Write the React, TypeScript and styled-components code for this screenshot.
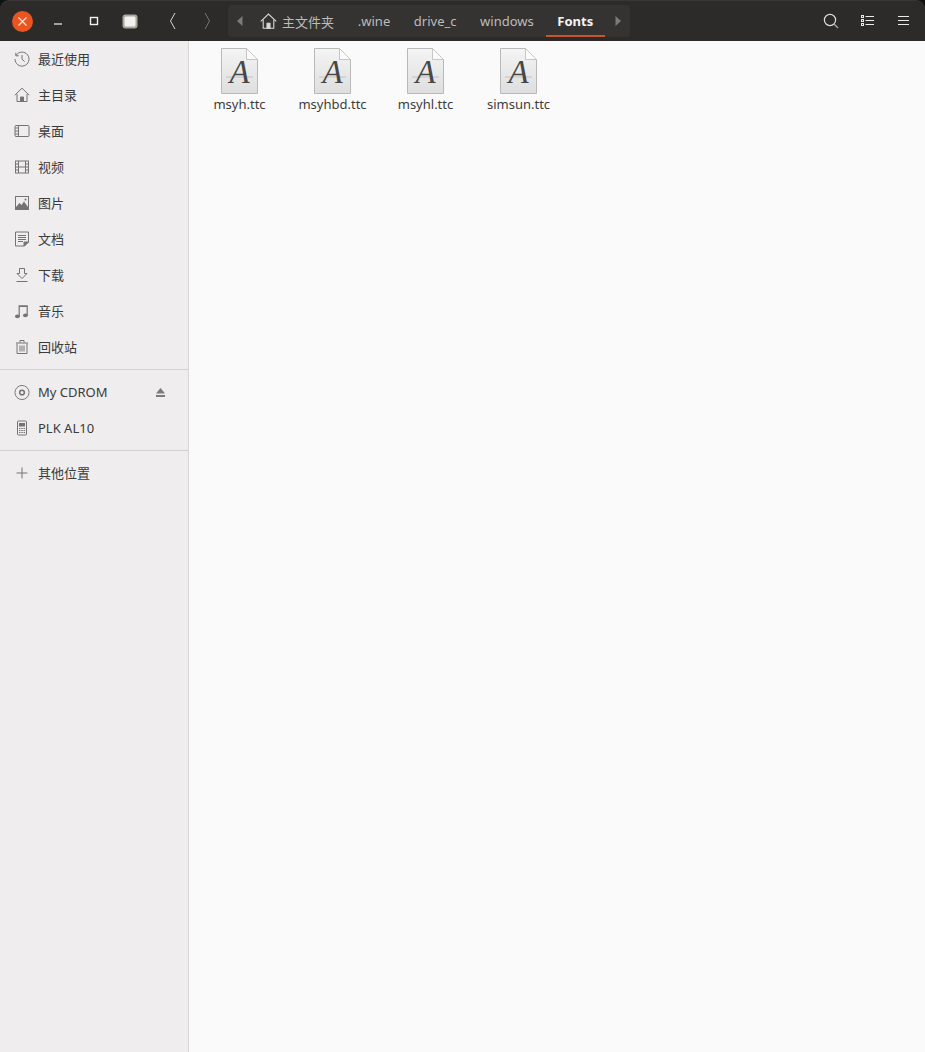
import React from "react";
import styled, { createGlobalStyle } from "styled-components";

const GlobalStyle = createGlobalStyle`
  html, body {
    margin: 0;
    padding: 0;
    background: #2c2b2a;
  }
  * {
    box-sizing: border-box;
  }
`;

const latin = `"Noto Sans", "Noto Sans CJK SC", sans-serif`;

const Win = styled.div`
  width: 925px;
  height: 1052px;
  display: flex;
  flex-direction: column;
  overflow: hidden;
  font-family: ${latin};
  background: #fafafa;
`;

const HeaderBar = styled.header`
  height: 41px;
  flex: none;
  display: flex;
  align-items: center;
  padding: 0 4px;
  background: #2c2b2a;
  border-top: 1px solid #383736;
  border-radius: 9px 9px 0 0;
  box-shadow: 0 -9px 0 #111;
`;

const IconSlot = styled.div<{ $w: number }>`
  width: ${(p) => p.$w}px;
  height: 36px;
  flex: none;
  display: flex;
  align-items: center;
  justify-content: center;
`;

const CloseDot = styled.div`
  width: 21px;
  height: 21px;
  border-radius: 50%;
  background: #e95420;
  display: flex;
  align-items: center;
  justify-content: center;
`;

const PathBar = styled.nav`
  width: 402px;
  height: 32px;
  margin-left: 4px;
  flex: none;
  display: flex;
  align-items: stretch;
  background: #343332;
  border-radius: 4px;
`;

const PathArrow = styled.div<{ $w: number }>`
  width: ${(p) => p.$w}px;
  flex: none;
  display: flex;
  align-items: center;
  justify-content: center;
`;

const Crumb = styled.div<{ $active?: boolean }>`
  padding: 0 11.8px;
  display: flex;
  align-items: center;
  gap: 5px;
  font-size: 13px;
  font-weight: ${(p) => (p.$active ? 700 : 400)};
  color: ${(p) => (p.$active ? "#f4f4f3" : "#bdbcba")};
  border-bottom: 2px solid ${(p) => (p.$active ? "#c9532a" : "transparent")};
  border-top: 2px solid transparent;
  white-space: nowrap;
`;

const HomeCrumb = styled(Crumb)`
  padding-left: 8px;
  padding-right: 12px;
`;

const Tools = styled.div`
  margin-left: auto;
  display: flex;
`;

const Body = styled.div`
  flex: 1;
  display: flex;
  min-height: 0;
`;

const Sidebar = styled.aside`
  width: 189px;
  flex: none;
  background: #efedee;
  border-right: 1px solid #d8d6d5;
  color: #3b3b3b;
`;

const Row = styled.div`
  height: 36px;
  display: flex;
  align-items: center;
  padding-left: 14px;
  font-size: 13px;
  color: #3b3b3b;
`;

const RowIcon = styled.div`
  width: 16px;
  height: 16px;
  flex: none;
  margin-right: 8px;
  display: flex;
  align-items: center;
  justify-content: center;
`;

/* the CJK face sits a pixel lower than the latin one */
const CjkLabel = styled.span`
  margin-bottom: 2px;
`;

const EjectSlot = styled.div`
  margin-left: auto;
  margin-right: 23px;
  display: flex;
`;

const Divider = styled.div`
  height: 1px;
  margin: 4px 0;
  background: #d4d2d1;
`;

const Content = styled.main`
  flex: 1;
  display: flex;
  align-items: flex-start;
  padding: 6px 0 0 4px;
  background: #fafafa;
`;

const FileCell = styled.div`
  width: 93px;
  display: flex;
  flex-direction: column;
  align-items: center;
`;

const FileName = styled.div`
  font-size: 13px;
  line-height: 18px;
  color: #3d3d3d;
`;

const stroke = "#747474";

const Line = ({ children }: { children: React.ReactNode }) => (
  <svg width="16" height="16" viewBox="0 0 16 16" fill="none" stroke={stroke} strokeWidth="1">
    {children}
  </svg>
);

const sidebarIcons: Record<string, React.ReactNode> = {
  recent: (
    <Line>
      <path d="M2.2 4.2A7 7 0 1 1 1 8" />
      <path d="M1.8 1.8v3h3" />
      <path d="M8 4v4.2l2.6 2.4" />
    </Line>
  ),
  home: (
    <Line>
      <path d="M.8 8.2 8 1.2l7.2 7" />
      <path d="M3 7v7.5h10V7" />
      <path d="M6.5 14.5V10h3v4.5z" fill={stroke} />
    </Line>
  ),
  desktop: (
    <Line>
      <rect x="1" y="2.5" width="14" height="11" rx="1" />
      <path d="M4.5 2.5v11M1 5h3.5M1 8h3.5M1 11h3.5" />
    </Line>
  ),
  video: (
    <Line>
      <rect x="1.5" y="2" width="13" height="12" />
      <path d="M4.5 2v12M11.5 2v12M4.5 8h7M1.5 5h3M1.5 8h3M1.5 11h3M11.5 5h3M11.5 8h3M11.5 11h3" />
    </Line>
  ),
  picture: (
    <Line>
      <rect x="1.5" y="1.5" width="13" height="13" />
      <path d="M2 12l3.5-4 2 2 2.5-3.5 4 5.5v2H2z" fill={stroke} stroke="none" />
      <circle cx="11.5" cy="4.5" r="1" fill={stroke} stroke="none" />
    </Line>
  ),
  document: (
    <Line>
      <path d="M1.5 1h13v10l-4 4h-9z" />
      <path d="M4 4.5h8M4 6.5h8M4 8.5h8M4 10.5h5" />
      <path d="M10 15v-4h4.5z" fill={stroke} />
    </Line>
  ),
  download: (
    <Line>
      <path d="M5.5 1.5h5v5h2.5L8 11.5 3 6.5h2.5z" />
      <path d="M2.5 14.5h11" />
    </Line>
  ),
  music: (
    <svg width="16" height="16" viewBox="0 0 16 16" fill={stroke}>
      <path d="M4.6 2.2h9.2v10h-1.2V4H5.8v9.4H4.6z" />
      <ellipse cx="3.4" cy="13.3" rx="2.4" ry="1.9" />
      <ellipse cx="11.4" cy="12.3" rx="2.4" ry="1.9" />
    </svg>
  ),
  trash: (
    <Line>
      <path d="M2 4h12M6 3.5V1.5h4v2" />
      <path d="M3 4.5v10h10v-10" />
      <path d="M6 6.5v6M8 6.5v6M10 6.5v6" />
    </Line>
  ),
  disc: (
    <svg width="17" height="17" viewBox="0 0 17 17" fill="none" stroke={stroke} strokeWidth="1">
      <circle cx="8.5" cy="8.5" r="7.5" />
      <circle cx="8.5" cy="8.5" r="2.5" strokeWidth="1.6" />
    </svg>
  ),
  phone: (
    <svg width="16" height="16" viewBox="0 0 16 16" fill="none" stroke={stroke} strokeWidth="1">
      <rect x="3.5" y="1" width="9" height="14" rx="1" />
      <rect x="5" y="3" width="6" height="3.5" fill={stroke} stroke="none" />
      <path d="M5 8.5h1.5M7.3 8.5h1.5M9.6 8.5h1.5M5 10.5h1.5M7.3 10.5h1.5M9.6 10.5h1.5M5 12.5h1.5M7.3 12.5h1.5M9.6 12.5h1.5" />
    </svg>
  ),
  plus: (
    <Line>
      <path d="M8 2.5v11M2.5 8h11" />
    </Line>
  ),
};

const places = [
  ["recent", "最近使用"],
  ["home", "主目录"],
  ["desktop", "桌面"],
  ["video", "视频"],
  ["picture", "图片"],
  ["document", "文档"],
  ["download", "下载"],
  ["music", "音乐"],
  ["trash", "回收站"],
];

const crumbs = [".wine", "drive_c", "windows"];
const files = ["msyh.ttc", "msyhbd.ttc", "msyhl.ttc", "simsun.ttc"];

const FontFile = ({ id }: { id: string }) => (
  <svg width="38" height="48" viewBox="0 0 38 48">
    <defs>
      <linearGradient id={id} x1="0" y1="0" x2="0" y2="1">
        <stop offset="0" stopColor="#f4f4f4" />
        <stop offset="1" stopColor="#dedede" />
      </linearGradient>
    </defs>
    <path d="M.5 1.5h25l11 11v34H.5z" fill={`url(#${id})`} stroke="#b9b9b9" />
    <path d="M25.5 1.5v11h11z" fill="#fbfbfb" stroke="#c6c6c6" />
    <path d="M5 30h27" stroke="#9a9a9a" strokeOpacity=".45" />
    <text
      x="18.5"
      y="36"
      textAnchor="middle"
      fontFamily="'Liberation Serif', serif"
      fontStyle="italic"
      fontSize="33"
      fill="#474747"
    >
      A
    </text>
  </svg>
);

const App = () => (
  <Win>
    <GlobalStyle />
    <HeaderBar>
      <IconSlot $w={36}>
        <CloseDot>
          <svg width="11" height="11" viewBox="0 0 11 11" stroke="#fbe3d9" strokeWidth="1.2">
            <path d="M1.5 1.5l8 8M9.5 1.5l-8 8" />
          </svg>
        </CloseDot>
      </IconSlot>
      <IconSlot $w={36}>
        <svg width="10" height="10" viewBox="0 0 10 10" stroke="#f0f0f0" strokeWidth="1.2">
          <path d="M1 8h8" />
        </svg>
      </IconSlot>
      <IconSlot $w={36}>
        <svg width="10" height="10" viewBox="0 0 10 10" fill="none" stroke="#f0f0f0" strokeWidth="1.4">
          <rect x="1.5" y="1.5" width="7" height="7" />
        </svg>
      </IconSlot>
      <IconSlot $w={36}>
        <svg width="16" height="15" viewBox="0 0 16 15">
          <rect x=".5" y=".5" width="15" height="14" rx="3" fill="#a9a89c" />
          <rect x="2.5" y="2.5" width="11" height="10" rx="1.5" fill="#f1f1ef" />
        </svg>
      </IconSlot>
      <IconSlot $w={8} />
      <IconSlot $w={34}>
        <svg width="10" height="18" viewBox="0 0 10 18" fill="none" stroke="#d6d5d3" strokeWidth="1">
          <path d="M7 1 2.5 9 7 17" />
        </svg>
      </IconSlot>
      <IconSlot $w={34}>
        <svg width="10" height="18" viewBox="0 0 10 18" fill="none" stroke="#77766f" strokeWidth="1">
          <path d="M3 1l4.5 8L3 17" />
        </svg>
      </IconSlot>
      <PathBar>
        <PathArrow $w={24}>
          <svg width="6" height="10" viewBox="0 0 6 10" fill="#7c7b79">
            <path d="M5.5 0v10L0 5z" />
          </svg>
        </PathArrow>
        <HomeCrumb>
          <svg width="17" height="16" viewBox="0 0 17 16" fill="none" stroke="#d8d7d5" strokeWidth="1.1">
            <path d="M.8 8.3 8.5 1l7.7 7.3" />
            <path d="M3.2 6.8v8.4h10.6V6.8" />
            <path d="M7 15.2v-5h3v5z" fill="#d8d7d5" />
          </svg>
          主文件夹
        </HomeCrumb>
        {crumbs.map((c) => (
          <Crumb key={c}>{c}</Crumb>
        ))}
        <Crumb $active>Fonts</Crumb>
        <PathArrow $w={25}>
          <svg width="6" height="10" viewBox="0 0 6 10" fill="#7c7b79">
            <path d="M.5 0v10L6 5z" />
          </svg>
        </PathArrow>
      </PathBar>
      <Tools>
        <IconSlot $w={36}>
          <svg width="16" height="16" viewBox="0 0 16 16" fill="none" stroke="#dedddb" strokeWidth="1.2">
            <circle cx="7" cy="7" r="5.6" />
            <path d="M11 11l4 4" stroke="#a5a4a2" strokeWidth="1.4" />
          </svg>
        </IconSlot>
        <IconSlot $w={36}>
          <svg width="13" height="12" viewBox="0 0 13 12" fill="none" stroke="#ecebe9">
            <rect x=".5" y=".5" width="2" height="2" />
            <rect x=".5" y="4.5" width="2" height="2" />
            <rect x=".5" y="8.5" width="2" height="2" />
            <path d="M4.5 1.5H13M4.5 5.5H13M4.5 9.5H13" />
          </svg>
        </IconSlot>
        <IconSlot $w={36}>
          <svg width="11" height="10" viewBox="0 0 11 10" stroke="#ecebe9">
            <path d="M0 .5h11M0 4.5h11M0 8.5h11" />
          </svg>
        </IconSlot>
      </Tools>
    </HeaderBar>
    <Body>
      <Sidebar>
        {places.map(([icon, label]) => (
          <Row key={icon}>
            <RowIcon>{sidebarIcons[icon]}</RowIcon>
            <CjkLabel>{label}</CjkLabel>
          </Row>
        ))}
        <Divider />
        <Row>
          <RowIcon>{sidebarIcons.disc}</RowIcon>
          My CDROM
          <EjectSlot>
            <svg width="9" height="9" viewBox="0 0 9 9" fill="#7a7a7a">
              <path d="M4.5 0 9 5.5H0zM0 7h9v2H0z" />
            </svg>
          </EjectSlot>
        </Row>
        <Row>
          <RowIcon>{sidebarIcons.phone}</RowIcon>
          PLK AL10
        </Row>
        <Divider />
        <Row>
          <RowIcon>{sidebarIcons.plus}</RowIcon>
          <CjkLabel>其他位置</CjkLabel>
        </Row>
      </Sidebar>
      <Content>
        {files.map((f, i) => (
          <FileCell key={f}>
            <FontFile id={`page-${i}`} />
            <FileName>{f}</FileName>
          </FileCell>
        ))}
      </Content>
    </Body>
  </Win>
);

export default App;
